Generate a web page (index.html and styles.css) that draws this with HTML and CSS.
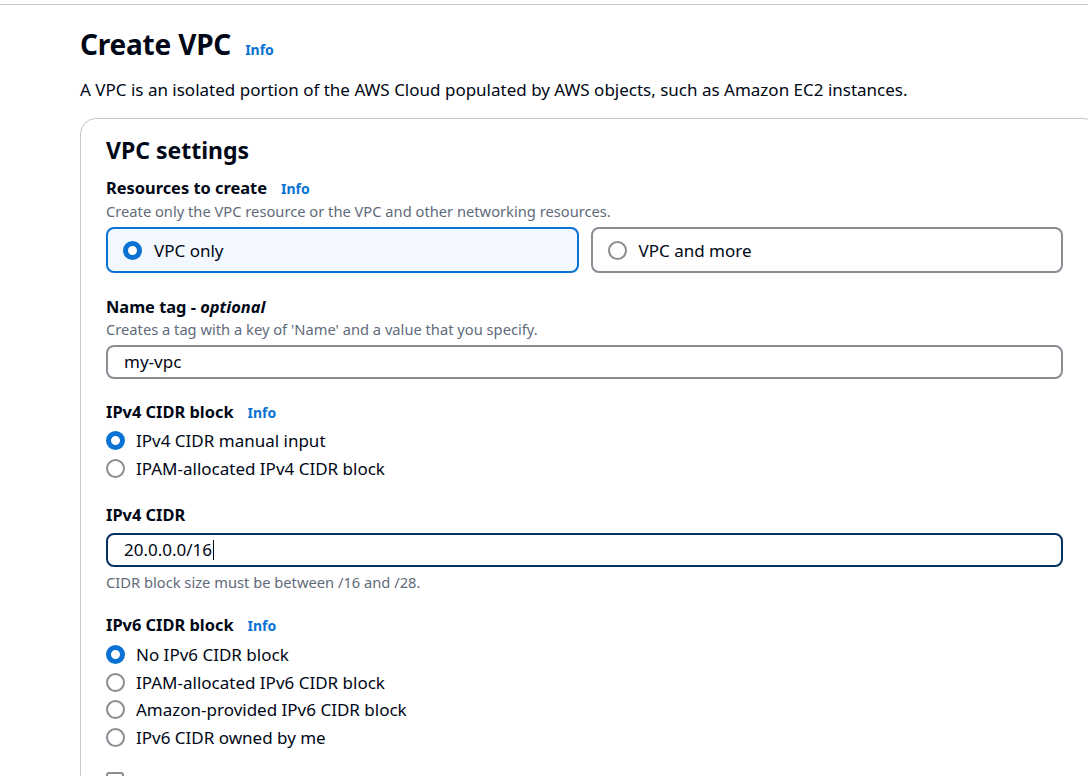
FILE: index.html
```html
<!DOCTYPE html>
<html lang="en">
<head>
<meta charset="utf-8">
<title>Create VPC</title>
<link rel="stylesheet" href="styles.css">
</head>
<body>
<div class="topline"></div>
<main class="page">
  <header class="page-header">
    <h1 class="title">Create VPC</h1>
    <a class="info info-lg" href="#">Info</a>
  </header>
  <p class="lead">A VPC is an isolated portion of the AWS Cloud populated by AWS objects, such as Amazon EC2 instances.</p>

  <section class="panel">
    <h2 class="panel-title">VPC settings</h2>

    <div class="field field-first">
      <div class="label-row"><span class="label">Resources to create</span><a class="info" href="#">Info</a></div>
      <div class="desc">Create only the VPC resource or the VPC and other networking resources.</div>
      <div class="tiles">
        <div class="tile tile-on"><span class="radio radio-on"></span><span>VPC only</span></div>
        <div class="tile"><span class="radio"></span><span>VPC and more</span></div>
      </div>
    </div>

    <div class="field field-name">
      <div class="label-row"><span class="label">Name tag - <i>optional</i></span></div>
      <div class="desc">Creates a tag with a key of 'Name' and a value that you specify.</div>
      <div class="input input-name">my-vpc</div>
    </div>

    <div class="field field-v4">
      <div class="label-row"><span class="label">IPv4 CIDR block</span><a class="info" href="#">Info</a></div>
      <div class="radio-group">
        <div class="radio-row"><span class="radio radio-on"></span><span>IPv4 CIDR manual input</span></div>
        <div class="radio-row"><span class="radio"></span><span>IPAM-allocated IPv4 CIDR block</span></div>
      </div>
    </div>

    <div class="field field-cidr">
      <div class="label-row"><span class="label">IPv4 CIDR</span></div>
      <div class="input input-focus">20.0.0.0/16<span class="caret"></span></div>
      <div class="hint">CIDR block size must be between /16 and /28.</div>
    </div>

    <div class="field field-v6">
      <div class="label-row"><span class="label">IPv6 CIDR block</span><a class="info" href="#">Info</a></div>
      <div class="radio-group radio-group-v6">
        <div class="radio-row"><span class="radio radio-on"></span><span>No IPv6 CIDR block</span></div>
        <div class="radio-row"><span class="radio"></span><span>IPAM-allocated IPv6 CIDR block</span></div>
        <div class="radio-row"><span class="radio"></span><span>Amazon-provided IPv6 CIDR block</span></div>
        <div class="radio-row"><span class="radio"></span><span>IPv6 CIDR owned by me</span></div>
      </div>
    </div>

    <div class="field">
      <div class="checkbox-row"><span class="checkbox"></span></div>
    </div>
  </section>
</main>
</body>
</html>
```

FILE: styles.css
```css
html, body {
  margin: 0;
  padding: 0;
  background: #ffffff;
  overflow: hidden;
}
body {
  font-family: "Noto Sans", "Open Sans", sans-serif;
  color: #000716;
  width: 1088px;
  height: 776px;
}
.topline {
  height: 4px;
  border-bottom: 1px solid #c6c6cd;
}
.page {
  padding-left: 80px;
}
.page-header {
  display: flex;
  align-items: baseline;
  gap: 14px;
  margin-top: 21px;
  height: 36px;
}
.title {
  margin: 0;
  font-size: 28px;
  line-height: 36px;
  font-weight: 700;
  letter-spacing: -0.2px;
}
.info {
  color: #0972d3;
  font-size: 14px;
  font-weight: 700;
  text-decoration: none;
}
.lead {
  margin: 17px 0 0;
  font-size: 17px;
  line-height: 22px;
}
.panel {
  margin-top: 17px;
  width: 1020px;
  box-sizing: border-box;
  border: 1px solid #c6c6cd;
  border-radius: 16px;
  padding: 16px 26px 20px 25px;
}
.panel-title {
  margin: 0;
  font-size: 23px;
  line-height: 30px;
  font-weight: 700;
}
.field {
  margin-top: 21px;
}
.field-first {
  margin-top: 12px;
}
.field-name {
  margin-top: 23px;
}
.field-v4 {
  margin-top: 22px;
}
.field-cidr {
  margin-top: 22px;
}
.field-v6 {
  margin-top: 22px;
}
.label-row {
  display: flex;
  align-items: baseline;
  gap: 14px;
  height: 22px;
}
.label {
  font-size: 16.4px;
  line-height: 22px;
  font-weight: 700;
}
.label i {
  font-weight: 700;
}
.desc, .hint {
  font-size: 14.7px;
  line-height: 20px;
  color: #5f6b7a;
  margin-top: 2px;
}
.field-name .desc {
  margin-top: 1px;
}
.hint {
  margin-top: 5px;
}
.tiles {
  display: flex;
  gap: 12px;
  margin-top: 6px;
  width: 957px;
}
.tile {
  flex: 1;
  height: 46px;
  box-sizing: border-box;
  border: 2px solid #8c8c94;
  border-radius: 8px;
  display: flex;
  align-items: center;
  gap: 12px;
  padding-left: 15px;
  font-size: 17px;
}
.tile-on {
  border-color: #0972d3;
  background: #f2f8fd;
}
.radio {
  width: 19px;
  height: 19px;
  box-sizing: border-box;
  border-radius: 50%;
  border: 2px solid #8c8c94;
  background: #fff;
  flex: none;
}
.radio-on {
  border: 5.5px solid #0972d3;
}
.input {
  margin-top: 7px;
  width: 957px;
  height: 34px;
  box-sizing: border-box;
  border: 2px solid #8c8c94;
  border-radius: 8px;
  padding-left: 16px;
  font-size: 17px;
  line-height: 30px;
  display: flex;
  align-items: center;
}
.input-name {
  margin-top: 6px;
}
.input-focus {
  border-color: #033160;
  margin-top: 7px;
}
.caret {
  display: inline-block;
  width: 1px;
  height: 20px;
  background: #000716;
  margin-left: 1px;
}
.radio-group {
  margin-top: 4px;
}
.radio-group-v6 {
  margin-top: 5px;
}
.radio-row {
  display: flex;
  align-items: center;
  gap: 11px;
  height: 27.5px;
  font-size: 17px;
}
.checkbox-row {
  height: 20px;
}
.checkbox {
  display: block;
  width: 14px;
  height: 14px;
  border: 2px solid #8c8c94;
  border-radius: 3px;
}
```
